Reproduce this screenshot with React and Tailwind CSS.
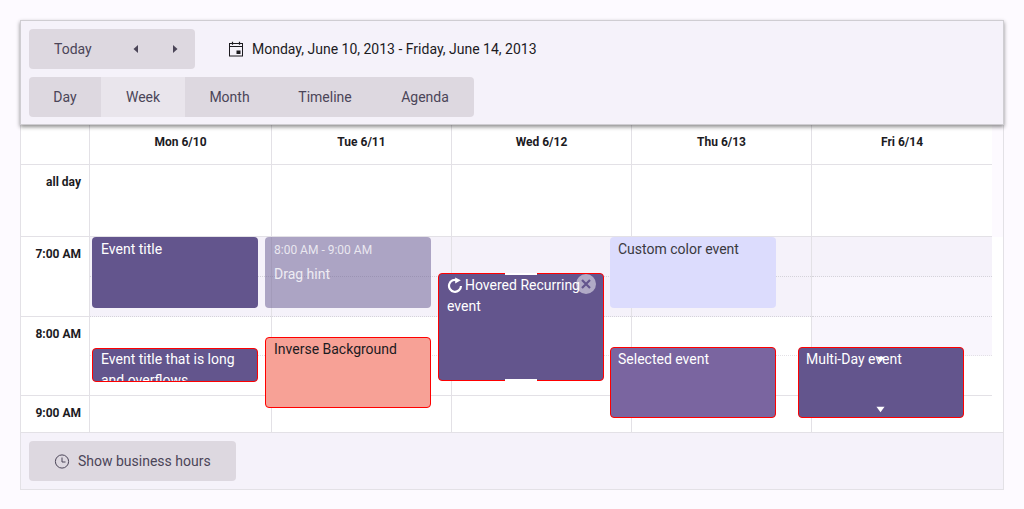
const sans = "font-['Roboto',sans-serif]";

function Cal() {
  return (
    <svg width="16" height="16" viewBox="0 0 16 16" className="text-[#1c1b1f]">
      <rect x="1.5" y="2.5" width="13" height="12.5" fill="none" stroke="currentColor" strokeWidth="1" />
      <path d="M1.5 5.5h13" stroke="currentColor" strokeWidth="1" />
      <path d="M4.5 0.8v3M11.5 0.8v3" stroke="currentColor" strokeWidth="1.2" />
      <rect x="8.5" y="9.5" width="4" height="3.5" fill="currentColor" />
    </svg>
  );
}

function Clock() {
  return (
    <svg width="16" height="16" viewBox="0 0 16 16" className="text-[#4b4558]">
      <circle cx="8" cy="8.5" r="6.6" fill="none" stroke="currentColor" strokeWidth="1" />
      <path d="M8 4.5v4.5h3.5" fill="none" stroke="currentColor" strokeWidth="1" />
    </svg>
  );
}

function Repeat() {
  return (
    <svg width="16" height="16" viewBox="0 0 16 16" className="shrink-0 text-white">
      <path d="M10.6 3.4A6 6 0 1 0 14 9" fill="none" stroke="currentColor" strokeWidth="2.2" />
      <path d="M8.2 0.4v6.2l5.6-3.3z" fill="currentColor" />
    </svg>
  );
}

function Tri({ dir, className }) {
  const d = dir === "left" ? "M6 1v8L1.5 5z" : dir === "right" ? "M2 1v8l4.5-4z" : "M0.5 2h9L5 8z";
  return (
    <svg width="10" height="10" viewBox="0 0 10 10" className={className}>
      <path d={d} fill="currentColor" />
    </svg>
  );
}

const columns = ["Mon 6/10", "Tue 6/11", "Wed 6/12", "Thu 6/13", "Fri 6/14"];
const widths = ["w-[182px]", "w-[180px]", "w-[180px]", "w-[180px]", "w-[180px]"];

function Event({ cls, children }) {
  return <div className={`absolute w-[166px] rounded-[4px] overflow-hidden text-[14px] leading-[21px] ${cls}`}>{children}</div>;
}

export default function App() {
  return (
    <div className={`${sans} w-[1024px] h-[509px] bg-[#fdfaff] pt-5 px-5 overflow-hidden`}>
      <div className="relative w-[984px] h-[470px] border border-[#e3e1e6] flex flex-col bg-[#fdfaff]">
        <div className="relative z-20 -mx-px -mt-px h-[105px] shrink-0 bg-[#f5f2fa] border border-[#cfcdd2] shadow-[0_2px_4px_rgba(0,0,0,0.45)] pl-2 pt-2 flex flex-col gap-2">
          <div className="flex items-center h-10">
            <div className="w-[166px] h-10 rounded-[4px] bg-[#ddd8e0] flex items-center text-[14px] text-[#4b4558]">
              <span className="ml-[25px] w-[38px]">Today</span>
              <Tri dir="left" className="ml-[40px] text-[#4b4558]" />
              <Tri dir="right" className="ml-[29px] text-[#4b4558]" />
            </div>
            <div className="ml-[33px] flex items-center gap-2 text-[14px] text-[#1c1b1f]">
              <Cal />
              <span>Monday, June 10, 2013 - Friday, June 14, 2013</span>
            </div>
          </div>
          <div className="flex w-[445px] h-10 rounded-[4px] bg-[#ddd8e0] overflow-hidden text-[14px] text-[#4b4558]">
            <div className="w-[72px] flex items-center justify-center">Day</div>
            <div className="w-[84px] flex items-center justify-center bg-[#e9e5ec]">Week</div>
            <div className="w-[89px] flex items-center justify-center">Month</div>
            <div className="w-[102px] flex items-center justify-center">Timeline</div>
            <div className="w-[98px] flex items-center justify-center">Agenda</div>
          </div>
        </div>

        <div className="relative z-0 h-[307px] shrink-0 flex flex-col w-full">
          <div className="flex w-[971px] h-[40px] bg-white border-b border-[#e3e1e6] shrink-0">
            <div className="w-[69px] border-r border-[#e3e1e6]" />
            {columns.map((c, i) => (
              <div key={c} className={`${widths[i]} ${i < 4 ? "border-r border-[#e3e1e6]" : ""} pt-[9px] text-center text-[12px] leading-[16px] font-bold text-[#1c1b1f]`}>{c}</div>
            ))}
          </div>
          <div className="flex w-[971px] h-[72px] bg-white border-b border-[#e3e1e6] shrink-0">
            <div className="w-[69px] border-r border-[#e3e1e6] pt-[10px] pr-[8px] text-right text-[12px] leading-[14px] font-bold text-[#1c1b1f]">all day</div>
            {columns.map((c, i) => (
              <div key={c} className={`${widths[i]} ${i < 4 ? "border-r border-[#e3e1e6]" : ""}`} />
            ))}
          </div>
          <div className="flex flex-1 min-h-0 overflow-hidden bg-white">
            <div className="w-[69px] shrink-0 border-r border-[#e3e1e6] text-right text-[12px] font-bold text-[#1c1b1f]">
              <div className="h-[80px] border-b border-[#e3e1e6] pt-[9px] pr-[8px] leading-[16px]">7:00 AM</div>
              <div className="h-[79px] border-b border-[#e3e1e6] pt-[9px] pr-[8px] leading-[16px]">8:00 AM</div>
              <div className="pt-[9px] pr-[8px] leading-[16px]">9:00 AM</div>
            </div>
            {columns.map((c, i) => (
              <div key={c} className={`${i === 0 ? "w-[182px]" : "w-[180px]"} shrink-0 ${i < 4 ? "border-r border-[#e3e1e6]" : ""}`}>
                <div className="h-[40px] bg-[#f5f2fa] border-b border-dotted border-[#d5d3da]" />
                <div className={`h-[40px] ${i === 4 ? "bg-[#f9f6fd]" : "bg-[#f5f2fa]"} border-b border-dotted border-[#d5d3da]`} />
                <div className={`h-[39px] ${i === 4 ? "bg-[#f9f6fd]" : "bg-white"} border-b border-dotted border-[#e3e1e6]`} />
                <div className="h-[40px] border-b border-[#e3e1e6]" />
              </div>
            ))}
          </div>
        </div>

        <div className="flex-1 border-t border-[#e3e1e6] bg-[#f5f2fa] pt-2 pl-2">
          <div className="w-[207px] h-10 rounded-[4px] bg-[#ddd8e0] flex items-center pl-[25px] gap-[8px] text-[14px] text-[#4b4558]">
            <Clock />
            <span>Show business hours</span>
          </div>
        </div>

        <div className="absolute z-10 inset-0 pointer-events-none text-white">
          <Event cls="left-[71px] top-[216px] h-[71px] bg-[#63558d] pl-[9px] pr-2 pt-[2px]">Event title</Event>
          <Event cls="left-[244px] top-[216px] h-[71px] bg-[#63558d]/50 pl-[9px] pr-2 pt-[5px] text-white/80">
            <div className="text-[12px] leading-[16px] text-white/75">8:00 AM - 9:00 AM</div>
            <div className="mt-[6px] leading-[21px]">Drag hint</div>
          </Event>
          <Event cls="left-[71px] top-[327px] h-[34px] bg-[#63558d] border border-[#f00] px-[8px] pt-[0px]">Event title that is long and overflows</Event>
          <Event cls="left-[244px] top-[316px] h-[71px] bg-[#f7a196] border border-[#f00] pl-[8px] pr-[7px] pt-[1px] text-[#1c1b1f]">Inverse Background</Event>
          <Event cls="left-[417px] top-[252px] h-[108px] bg-[#63558d] border border-[#f00] px-[8px] pt-[1px] overflow-visible">
            <span className="absolute left-[66px] -top-px w-[32px] h-[2px] bg-white" />
            <span className="absolute left-[66px] -bottom-px w-[32px] h-[2px] bg-white" />
            <div className="relative">
              <span className="inline-block align-[-3px] mr-[2px]"><Repeat /></span>Hovered Recurring event
            </div>
            <span className="absolute right-[7px] top-0 w-[20px] h-[20px] rounded-full bg-white/50 flex items-center justify-center">
              <svg width="10" height="10" viewBox="0 0 10 10"><path d="M1 1l8 8M9 1l-8 8" stroke="#63558d" strokeWidth="2.2" /></svg>
            </span>
          </Event>
          <Event cls="left-[589px] top-[216px] h-[71px] bg-[#dcdcfd] pl-[8px] pr-2 pt-[2px] text-[#3a3940]">Custom color event</Event>
          <Event cls="left-[589px] top-[326px] h-[71px] bg-[#7a65a0] border border-[#f00] pl-[7px] pr-[7px] pt-[1px]">Selected event</Event>
          <Event cls="left-[777px] top-[326px] h-[71px] bg-[#63558d] border border-[#f00] pl-[7px] pr-[7px] pt-[1px]">
            Multi-Day event
            <Tri dir="down" className="absolute left-[77px] top-[7px] w-[9px] h-[9px]" />
            <Tri dir="down" className="absolute left-[77px] bottom-[3px] w-[9px] h-[9px]" />
          </Event>
        </div>
      </div>
    </div>
  );
}
